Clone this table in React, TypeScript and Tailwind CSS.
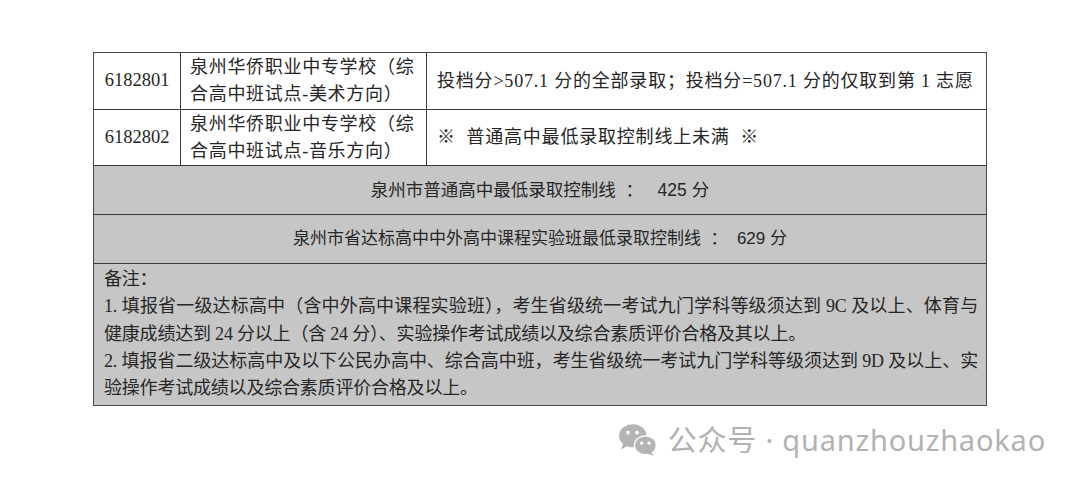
import React from 'react';

const rows = [
  {
    code: '6182801',
    school: ['泉州华侨职业中专学校（综', '合高中班试点-美术方向）'],
    result: '投档分>507.1 分的全部录取；投档分=507.1 分的仅取到第 1 志愿',
  },
  {
    code: '6182802',
    school: ['泉州华侨职业中专学校（综', '合高中班试点-音乐方向）'],
    result: '※  普通高中最低录取控制线上未满  ※',
  },
];

function WeChatIcon() {
  return (
    <svg width="40" height="34" viewBox="0 0 38 32" className="shrink-0">
      <ellipse cx="14" cy="12" rx="13" ry="11" fill="#b4b4b4" />
      <path d="M5 19 L3 25 L10 21 Z" fill="#b4b4b4" />
      <circle cx="9.5" cy="9" r="1.8" fill="#fff" />
      <circle cx="18" cy="9" r="1.8" fill="#fff" />
      <ellipse cx="26" cy="21" rx="11" ry="9.5" fill="#fff" />
      <ellipse cx="26" cy="21" rx="9.8" ry="8.4" fill="#b4b4b4" />
      <path d="M31 27 L34 31 L27 28.5 Z" fill="#b4b4b4" />
      <circle cx="22.5" cy="19" r="1.5" fill="#fff" />
      <circle cx="29.5" cy="19" r="1.5" fill="#fff" />
    </svg>
  );
}

export default function App() {
  return (
    <div className="w-[1080px] h-[483px] bg-white overflow-hidden">
      <div className="pt-[52px] pl-[93px]">
        <div className="w-[894px] border-[1.5px] border-[#4a4a4a] text-[#262626]">
          {rows.map((r, i) => (
            <div
              key={r.code}
              className={`flex ${i === 0 ? 'h-[57px]' : 'h-[56px]'} border-b border-[#3a3a3a] bg-white font-['Liberation_Serif','Noto_Sans_CJK_SC',serif]`}
            >
              <div className="w-[87px] shrink-0 border-r border-[#3a3a3a] flex items-center justify-center text-[18.5px]">
                {r.code}
              </div>
              <div className="w-[246px] shrink-0 border-r border-[#3a3a3a] flex flex-col justify-center pl-[9px] text-[18px] leading-[27px] tracking-[0.7px]">
                {r.school.map((s) => (
                  <span key={s}>{s}</span>
                ))}
              </div>
              <div className="flex-1 flex items-center pl-[10px] text-[18px] whitespace-pre tracking-[0.8px]">
                {r.result}
              </div>
            </div>
          ))}
          <div className="h-[49px] bg-[#c6c6c6] border-b border-[#3a3a3a] flex items-center justify-center text-[17.5px] whitespace-pre font-['Liberation_Sans','Noto_Sans_CJK_SC',sans-serif]">
            {'泉州市普通高中最低录取控制线  ：   425 分'}
          </div>
          <div className="h-[49px] bg-[#c6c6c6] border-b border-[#3a3a3a] flex items-center justify-center text-[17px] whitespace-pre font-['Liberation_Sans','Noto_Sans_CJK_SC',sans-serif]">
            {'泉州市省达标高中中外高中课程实验班最低录取控制线  ：  629 分'}
          </div>
          <div className="h-[141px] bg-[#c6c6c6] pl-[10px] pr-[8px] pt-[2px] text-[18px] leading-[27.3px] text-justify tracking-[-0.2px] font-['Liberation_Serif','Noto_Sans_CJK_SC',serif]">
            <p>备注：</p>
            <p>
              1. 填报省一级达标高中（含中外高中课程实验班），考生省级统一考试九门学科等级须达到 9C 及以上、体育与健康成绩达到 24 分以上（含 24 分）、实验操作考试成绩以及综合素质评价合格及其以上。
            </p>
            <p>
              2. 填报省二级达标高中及以下公民办高中、综合高中班，考生省级统一考试九门学科等级须达到 9D 及以上、实验操作考试成绩以及综合素质评价合格及以上。
            </p>
          </div>
        </div>
      </div>
      <div className="flex justify-end items-center pr-[34px] mt-[12px] gap-[10px]">
        <WeChatIcon />
        <span className="text-[29px] text-[#b2b2b2] tracking-[0.8px] whitespace-pre font-['Noto_Sans','Noto_Sans_CJK_SC',sans-serif]">
          {'公众号 · quanzhouzhaokao'}
        </span>
      </div>
    </div>
  );
}
